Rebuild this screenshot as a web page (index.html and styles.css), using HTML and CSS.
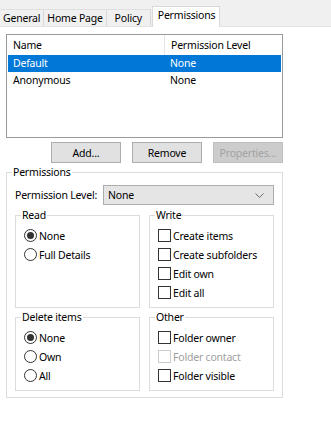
FILE: index.html
```html
<!DOCTYPE html>
<html lang="en">
<head>
    <meta charset="UTF-8">
    <meta name="viewport" content="width=device-width, initial-scale=1.0">
    <title>Folder Properties - Permissions</title>
    <link rel="stylesheet" href="styles.css">
</head>
<body>
    <div class="tabs">
        <div class="tab">General</div>
        <div class="tab">Home Page</div>
        <div class="tab">Policy</div>
        <div class="tab active">Permissions</div>
    </div>

    <div class="page">
        <div class="list">
            <div class="list-head">
                <span class="col-name">Name</span>
                <span class="col-level">Permission Level</span>
            </div>
            <div class="row selected">
                <span class="col-name">Default</span>
                <span class="col-level">None</span>
            </div>
            <div class="row">
                <span class="col-name">Anonymous</span>
                <span class="col-level">None</span>
            </div>
        </div>

        <div class="buttons">
            <button class="btn">Add...</button>
            <button class="btn">Remove</button>
            <button class="btn" disabled>Properties...</button>
        </div>

        <fieldset class="group outer">
            <legend>Permissions</legend>
            <div class="level-row">
                <span class="level-label">Permission Level:</span>
                <div class="combo">
                    <span>None</span>
                    <svg width="9" height="5" viewBox="0 0 9 5"><path d="M0.5 0.5 L4.5 4.5 L8.5 0.5" fill="none" stroke="#6d6d6d" stroke-width="1"/></svg>
                </div>
            </div>

            <div class="groups">
                <fieldset class="group">
                    <legend>Read</legend>
                    <div class="opt"><span class="radio checked"></span>None</div>
                    <div class="opt"><span class="radio"></span>Full Details</div>
                </fieldset>
                <fieldset class="group">
                    <legend>Write</legend>
                    <div class="opt"><span class="check"></span>Create items</div>
                    <div class="opt"><span class="check"></span>Create subfolders</div>
                    <div class="opt"><span class="check"></span>Edit own</div>
                    <div class="opt"><span class="check"></span>Edit all</div>
                </fieldset>
                <fieldset class="group">
                    <legend>Delete items</legend>
                    <div class="opt"><span class="radio checked"></span>None</div>
                    <div class="opt"><span class="radio"></span>Own</div>
                    <div class="opt"><span class="radio"></span>All</div>
                </fieldset>
                <fieldset class="group">
                    <legend>Other</legend>
                    <div class="opt"><span class="check"></span>Folder owner</div>
                    <div class="opt disabled"><span class="check"></span>Folder contact</div>
                    <div class="opt"><span class="check"></span>Folder visible</div>
                </fieldset>
            </div>
        </fieldset>
    </div>
</body>
</html>
```

FILE: styles.css
```css
body {
    margin: 0;
    background-color: #fff;
    font-family: "Noto Sans", "Open Sans", Arial, sans-serif;
    font-size: 10.5px;
    letter-spacing: -0.2px;
    color: #000;
}
.tabs {
    display: flex;
    align-items: flex-end;
    height: 27px;
    box-sizing: border-box;
    background-color: #f0f0f0;
    border-bottom: 1px solid #e3e3e3;
}
.tab {
    min-width: 44px;
    height: 17px;
    line-height: 16px;
    padding: 0 3px;
    text-align: center;
    border-top: 1px solid #e0e0e0;
    border-right: 1px solid #d9d9d9;
    box-sizing: border-box;
}
.tab.active {
    height: 21px;
    line-height: 17px;
    margin-left: 1px;
    margin-bottom: -1px;
    padding: 0 4px 0 5px;
    background-color: #fff;
    border: 1px solid #d9d9d9;
    border-bottom: none;
}
.page {
    padding: 7px 0 0 6px;
    width: 277px;
}
.list {
    height: 104px;
    box-sizing: border-box;
    border: 1px solid #9a9a9a;
    padding: 0 1px;
}
.list-head,
.row {
    display: flex;
}
.list-head {
    height: 20px;
    line-height: 20px;
}
.row {
    height: 17px;
    line-height: 17px;
}
.col-name {
    width: 156px;
    padding-left: 5px;
    box-sizing: border-box;
}
.col-level {
    padding-left: 6px;
}
.list-head .col-name {
    border-right: 1px solid #e5e5e5;
    width: 157px;
}
.row.selected {
    background-color: #0078d7;
    color: #fff;
}
.buttons {
    display: flex;
    justify-content: flex-end;
    gap: 11px;
    margin-top: 4px;
}
.btn {
    width: 70px;
    height: 21px;
    padding: 0;
    font-family: inherit;
    font-size: 10.5px;
    letter-spacing: -0.2px;
    color: #000;
    background-color: #e1e1e1;
    border: 1px solid #adadad;
}
.btn:disabled {
    color: #a3a3a3;
    background-color: #cccccc;
    border-color: #bfbfbf;
}
.group {
    margin: 0;
    min-width: 0;
    border: 1px solid #dcdcdc;
    padding: 3px 6px 5px 8px;
}
.group legend {
    padding: 0 1px;
    margin-left: -3px;
    line-height: 15px;
}
.outer {
    margin-top: 2px;
    padding: 5px 8px 6px 8px;
}
.level-row {
    display: flex;
    align-items: center;
}
.level-label {
    width: 88px;
}
.combo {
    flex: 1;
    height: 20px;
    box-sizing: border-box;
    display: flex;
    align-items: center;
    justify-content: space-between;
    padding: 0 9px 0 4px;
    background-color: #e5e5e5;
    border: 1px solid #adadad;
}
.groups {
    display: grid;
    grid-template-columns: 125px 125px;
    column-gap: 9px;
    row-gap: 2px;
    margin-top: 3px;
}
.opt {
    display: flex;
    align-items: center;
    height: 19px;
}
.radio,
.check {
    width: 13px;
    height: 13px;
    box-sizing: border-box;
    border: 1px solid #333;
    background-color: #fff;
    margin-right: 2px;
    flex-shrink: 0;
}
.radio {
    border-radius: 50%;
    display: flex;
    align-items: center;
    justify-content: center;
}
.radio.checked::after {
    content: "";
    width: 7px;
    height: 7px;
    border-radius: 50%;
    background-color: #333;
}
.opt.disabled {
    color: #a0a0a0;
}
.opt.disabled .check {
    border-color: #cccccc;
}
```
